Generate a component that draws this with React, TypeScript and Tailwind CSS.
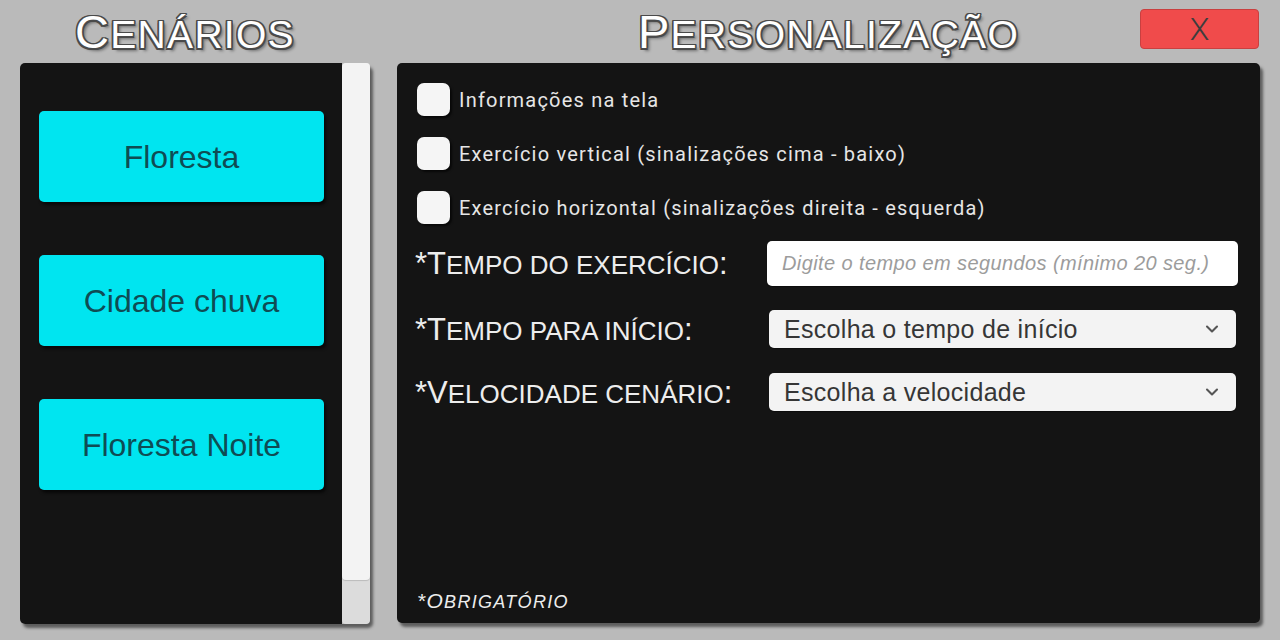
import { ChevronDown } from 'lucide-react';

const outline =
  "[text-shadow:-1.5px_-1.5px_0_#4a4a4a,1.5px_-1.5px_0_#4a4a4a,-1.5px_1.5px_0_#4a4a4a,1.5px_1.5px_0_#4a4a4a,0_-1.5px_0_#4a4a4a,0_1.5px_0_#4a4a4a,-1.5px_0_0_#4a4a4a,1.5px_0_0_#4a4a4a,3px_3px_3px_rgba(0,0,0,0.4)]";

// Unity-style small caps: lowercase letters become smaller capitals
function Caps({ text, big, small }: { text: string; big: string; small: string }) {
  const runs: { s: string; low: boolean }[] = [];
  for (const ch of text) {
    const low = ch === ' ' || ch !== ch.toUpperCase();
    const last = runs[runs.length - 1];
    if (last && last.low === low) last.s += ch;
    else runs.push({ s: ch, low });
  }
  return (
    <>
      {runs.map((r, i) => (
        <span key={i} className={r.low ? small : big}>
          {r.low ? r.s.toUpperCase() : r.s}
        </span>
      ))}
    </>
  );
}

const scenarios = ['Floresta', 'Cidade chuva', 'Floresta Noite'];

const options = [
  'Informações na tela',
  'Exercício vertical (sinalizações cima - baixo)',
  'Exercício horizontal (sinalizações direita - esquerda)',
];

function Label({ text }: { text: string }) {
  return (
    <div className="w-[352px] shrink-0 -ml-[2px] leading-none text-[#ededed] whitespace-nowrap">
      <Caps text={text} big="text-[31px]" small="text-[26px]" />
    </div>
  );
}

function Select({ value }: { value: string }) {
  return (
    <div className="ml-[2px] w-[467px] h-[38px] bg-[#f3f3f3] rounded-[5px] pl-[15px] pr-[14px] flex items-center justify-between shadow-[0_1px_1px_rgba(0,0,0,0.4)]">
      <span className="text-[25px] text-[#363636] tracking-[0.3px] leading-none">{value}</span>
      <ChevronDown size={20} strokeWidth={2.5} className="text-[#555]" />
    </div>
  );
}

export default function App() {
  return (
    <div className="w-[1280px] h-[640px] bg-[#bababa] flex px-[20px] gap-[27px] overflow-hidden font-['Liberation_Sans',Arial,sans-serif]">
      <div className="w-[350px] flex flex-col">
        <div className="h-[63px] flex items-center justify-center pr-[20px]">
          <h1 className={`text-white leading-none tracking-[1.3px] whitespace-nowrap ${outline}`}>
            <Caps text="Cenários" big="text-[47px]" small="text-[39px]" />
          </h1>
        </div>
        <div className="h-[561px] flex rounded-[5px] shadow-[3px_4px_3px_rgba(0,0,0,0.5)]">
          <div className="flex-1 bg-[#141414] rounded-l-[5px] pt-[48px] pl-[19px] pr-[18px] flex flex-col gap-[53px]">
            {scenarios.map(s => (
              <button
                key={s}
                className="h-[91px] w-full bg-[#00e5f0] rounded-[5px] text-[32px] text-[#0f4c54] shadow-[2px_3px_3px_rgba(0,0,0,0.6)]"
              >
                {s}
              </button>
            ))}
          </div>
          <div className="w-[28px] bg-[#dcdcdc] rounded-[4px] flex flex-col">
            <div className="h-[517px] bg-[#f3f3f3] rounded-[4px] shadow-[0_1px_1px_rgba(0,0,0,0.15)]" />
          </div>
        </div>
      </div>

      <div className="flex-1 flex flex-col">
        <div className="h-[63px] grid grid-cols-[1fr_auto_1fr] items-center">
          <div />
          <h1 className={`text-white leading-none tracking-[1.3px] whitespace-nowrap ${outline}`}>
            <Caps text="Personalização" big="text-[47px]" small="text-[39px]" />
          </h1>
          <button className="justify-self-end self-start mt-[9px] mr-[1px] w-[119px] h-[40px] bg-[#f04b4b] border border-[#c94040] rounded-[4px] text-[32px] leading-none text-[#3d3d3d] font-['Roboto',sans-serif] font-light">
            X
          </button>
        </div>

        <div className="h-[560px] bg-[#141414] rounded-[5px] shadow-[3px_4px_3px_rgba(0,0,0,0.5)] flex flex-col pt-[20px] pl-[20px] pr-[22px] pb-[12px]">
          <div className="flex flex-col gap-[21px]">
            {options.map(o => (
              <label key={o} className="flex items-center gap-[9px]">
                <span className="w-[33px] h-[33px] bg-[#f5f5f5] rounded-[7px] shadow-[2px_2px_2px_rgba(0,0,0,0.6)]" />
                <span className="text-[20px] text-[#e6e6e6] tracking-[1.2px] font-['Roboto',sans-serif]">{o}</span>
              </label>
            ))}
          </div>

          <div className="mt-[17px] flex items-center h-[45px]">
            <Label text="*Tempo do exercício:" />
            <input
              readOnly
              placeholder="Digite o tempo em segundos (mínimo 20 seg.)"
              className="w-[471px] h-[45px] bg-white rounded-[5px] px-[15px] text-[20px] tracking-[0.4px] outline-none placeholder:italic placeholder:text-[#9c9c9c] shadow-[0_1px_1px_rgba(0,0,0,0.4)]"
            />
          </div>
          <div className="mt-[24px] flex items-center h-[38px]">
            <Label text="*Tempo para início:" />
            <Select value="Escolha o tempo de início" />
          </div>
          <div className="mt-[25px] flex items-center h-[38px]">
            <Label text="*Velocidade cenário:" />
            <Select value="Escolha a velocidade" />
          </div>

          <div className="mt-auto leading-none italic text-[#ededed] tracking-[1.3px]">
            <Caps text="*Obrigatório" big="text-[21px]" small="text-[18px]" />
          </div>
        </div>
      </div>
    </div>
  );
}
